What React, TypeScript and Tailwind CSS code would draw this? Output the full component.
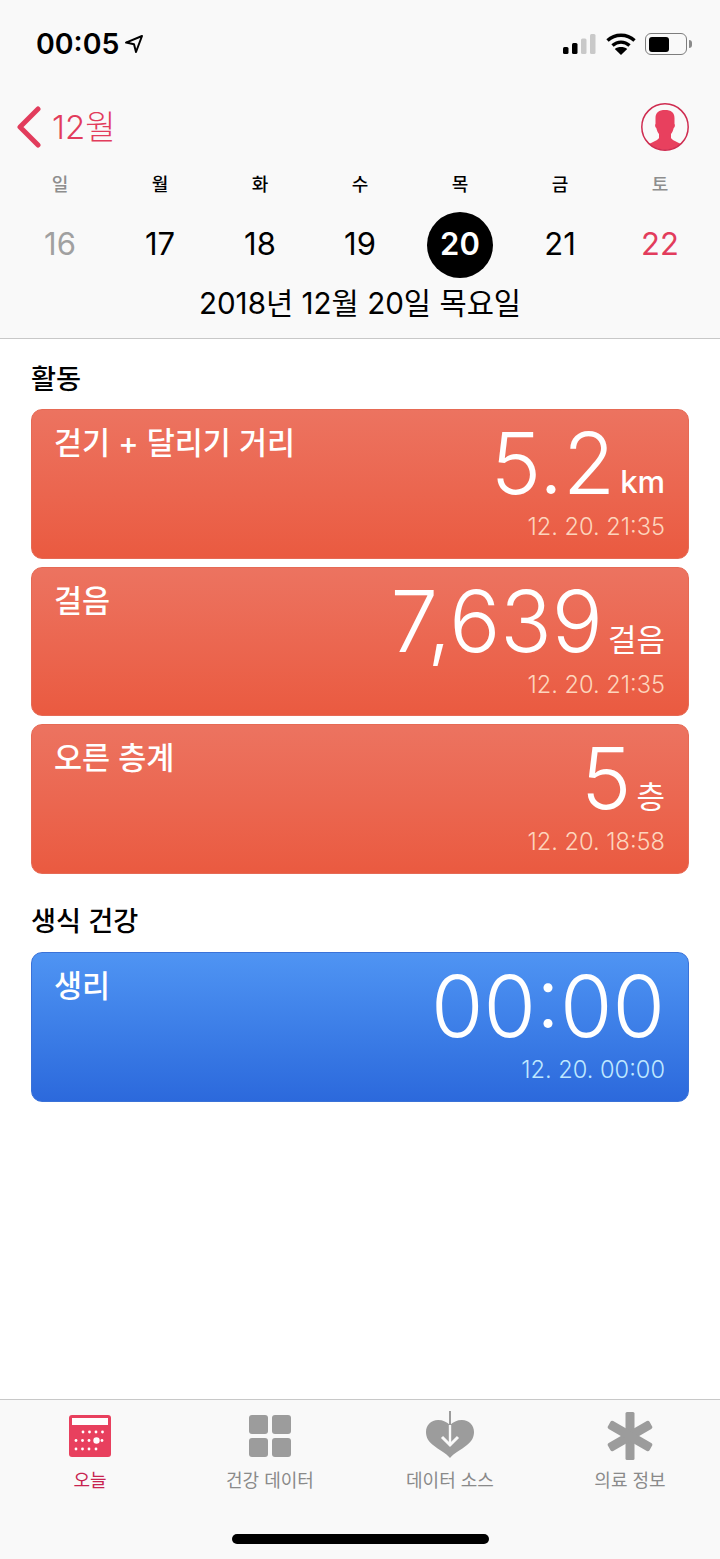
const FONT = "font-['Inter','Noto_Sans_CJK_KR',sans-serif]";

const days = [
  { label: "일", date: "16", tone: "muted" },
  { label: "월", date: "17", tone: "normal" },
  { label: "화", date: "18", tone: "normal" },
  { label: "수", date: "19", tone: "normal" },
  { label: "목", date: "20", tone: "today" },
  { label: "금", date: "21", tone: "normal" },
  { label: "토", date: "22", tone: "weekend" },
];

function LocationArrow() {
  return (
    <svg width="20" height="20" viewBox="0 0 20 20" fill="none" className="mb-[2px] ml-[5px]">
      <path d="M2 8.6 L18 2 L12 18 L10 10.2 Z" stroke="#000" strokeWidth="2" strokeLinejoin="round" />
    </svg>
  );
}

function StatusIcons() {
  return (
    <div className="flex items-center">
      <svg width="33" height="20" viewBox="0 0 33 20">
        <rect x="0" y="13" width="5.5" height="7" rx="1.5" fill="#000" />
        <rect x="9" y="9" width="5.5" height="11" rx="1.5" fill="#000" />
        <rect x="18" y="4.5" width="5.5" height="15.5" rx="1.5" fill="#c9c9c9" />
        <rect x="27" y="0" width="5.5" height="20" rx="1.5" fill="#c9c9c9" />
      </svg>
      <svg width="30" height="22" viewBox="0 0 30 22" className="ml-[10px]">
        <path d="M1.5 7.5 C9 0.5 21 0.5 28.5 7.5" fill="none" stroke="#000" strokeWidth="3.4" />
        <path d="M6.5 12.5 C11.5 8 18.5 8 23.5 12.5" fill="none" stroke="#000" strokeWidth="3.4" />
        <path d="M8.8 16 C12 13.4 18 13.4 21.2 16 L15 22 Z" fill="#000" />
      </svg>
      <div className="ml-[9px] flex items-center">
        <div className="flex h-[22px] w-[42px] items-center rounded-[6px] border border-[#7d7d7d] p-[2.5px]">
          <div className="h-full w-[20px] rounded-[3px] bg-black" />
        </div>
        <div className="ml-[2px] h-[8px] w-[3px] rounded-r-full bg-[#8a8a8a]" />
      </div>
    </div>
  );
}

function ProfileIcon() {
  return (
    <svg width="48" height="48" viewBox="0 0 48 48">
      <defs>
        <clipPath id="profile-clip">
          <circle cx="24" cy="24" r="23" />
        </clipPath>
      </defs>
      <g clipPath="url(#profile-clip)">
        <path
          d="M24 7 C30 7 33.5 9.5 33.5 15 L33.5 21 C34.3 21.5 33.9 24.5 32.7 25 C32 28 31 30 30 31 L30 35 C31 38 42 40 46 46 L46 48 L2 48 L2 46 C6 40 17 38 18 35 L18 31 C17 30 16 28 15.3 25 C14.1 24.5 13.7 21.5 14.5 21 L14.5 15 C14.5 9.5 18 7 24 7 Z"
          fill="#e8405e"
        />
      </g>
      <circle cx="24" cy="24" r="23.2" fill="none" stroke="#cf2c50" strokeWidth="1.5" />
    </svg>
  );
}

function Card({ title, value, unit, unitBold = false, time, blue = false }: { title: string; value: string; unit?: string; unitBold?: boolean; time: string; blue?: boolean }) {
  return (
    <div
      className={`flex h-[149.5px] justify-between rounded-[11px] border pl-[22px] pr-[23px] ${
        blue
          ? "border-[#3a72d8] bg-gradient-to-b from-[#4f94f3] to-[#2c69dc]"
          : "border-[#e66a55] bg-gradient-to-b from-[#ec7360] to-[#ea5a40]"
      }`}
    >
      <div className="pt-[12px] text-[30.5px] font-medium leading-[42px] text-white">{title}</div>
      <div className="flex flex-col items-end">
        <div className="flex h-[102px] items-end pb-[6px]">
          <span className="font-['Inter'] text-[85px] font-light leading-[85px] text-white">{value}</span>
          {unit && <span className={`mb-[4px] ml-[5px] text-[31px] leading-[40px] text-white ${unitBold ? "font-medium" : "font-normal"}`}>{unit}</span>}
        </div>
        <div className={`text-[23.6px] font-light leading-[30px] ${blue ? "text-[#bfe8ff]" : "text-[#fdd5bd]"}`}>{time}</div>
      </div>
    </div>
  );
}

function Tab({ label, active = false, children }: { label: string; active?: boolean; children: React.ReactNode }) {
  return (
    <div className="flex w-[180px] flex-col items-center">
      <div className="flex h-[50px] items-center justify-center">{children}</div>
      <div className={`mt-[7px] text-[18px] leading-[26px] ${active ? "text-[#c8234f]" : "text-[#8a8a8a]"}`}>{label}</div>
    </div>
  );
}

export default function App() {
  return (
    <div className={`flex h-[1559px] w-[720px] flex-col overflow-hidden bg-white ${FONT}`}>
      {/* Header */}
      <div className="h-[339px] border-b border-[#c8c8c8] bg-[#f9f9f9]">
        <div className="flex h-[88px] items-center justify-between pl-[36px] pr-[28px]">
          <div className="flex items-center pt-[1px] text-[28.5px] font-semibold leading-none text-black">
            00:05
            <LocationArrow />
          </div>
          <StatusIcons />
        </div>
        <div className="flex h-[78px] items-center justify-between pl-[17px] pr-[31px]">
          <div className="flex items-center">
            <svg width="24" height="42" viewBox="0 0 24 42" fill="none">
              <path d="M21 3 L3 21 L21 39" stroke="#e23c5c" strokeWidth="5" strokeLinecap="round" strokeLinejoin="round" />
            </svg>
            <span className="ml-[11px] text-[33px] font-light leading-none text-[#e23c5c]">12월</span>
          </div>
          <ProfileIcon />
        </div>
        <div className="mt-[7px] grid grid-cols-7 px-[10px]">
          {days.map((d) => (
            <div key={d.date} className="flex flex-col items-center">
              <div className={`text-[18px] font-medium leading-[24px] ${d.tone === "muted" || d.tone === "weekend" ? "text-[#8e8e8e]" : "text-black"}`}>{d.label}</div>
              <div
                className={`mt-[15px] flex h-[66px] w-[66px] items-center justify-center rounded-full pb-[3px] text-[31px] leading-none ${
                  d.tone === "today"
                    ? "bg-black font-semibold text-white"
                    : d.tone === "muted"
                      ? "text-[#a0a0a0]"
                      : d.tone === "weekend"
                        ? "text-[#e23c5c]"
                        : "text-black"
                }`}
              >
                {d.date}
              </div>
            </div>
          ))}
        </div>
        <div className="mt-[5px] text-center text-[29.6px] leading-[40px] text-black">2018년 12월 20일 목요일</div>
      </div>

      {/* Content */}
      <div className="flex-1 px-[31px]">
        <div className="pb-[9px] pt-[21px] text-[27.2px] font-medium leading-[40px] text-black">활동</div>
        <div className="flex flex-col gap-[8px]">
          <Card title="걷기 + 달리기 거리" value="5.2" unit="km" unitBold time="12. 20. 21:35" />
          <Card title="걸음" value="7,639" unit="걸음" time="12. 20. 21:35" />
          <Card title="오른 층계" value="5" unit="층" time="12. 20. 18:58" />
        </div>
        <div className="pb-[10px] pt-[28.5px] text-[27.2px] font-medium leading-[40px] text-black">생식 건강</div>
        <Card title="생리" value="00:00" time="12. 20. 00:00" blue />
      </div>

      {/* Tab bar */}
      <div className="relative h-[160px] border-t border-[#c8c8c8] bg-[#f9f9f9]">
        <div className="flex pt-[11px]">
          <Tab label="오늘" active>
            <svg width="42" height="42" viewBox="0 0 42 42">
              <rect width="42" height="42" rx="3" fill="#e8405e" />
              <rect x="3" y="3" width="36" height="7" fill="#fff" />
              {[12, 18.5, 25, 31.5].map((x) => <circle key={x} cx={x + 2} cy="17" r="1.4" fill="#fff" />)}
              {[7, 13.5, 20, 33].map((x) => <circle key={x} cx={x} cy="25.5" r="1.4" fill="#fff" />)}
              <circle cx="27.5" cy="25.5" r="3.2" fill="#fff" />
              {[7, 13.5, 20, 27].map((x) => <circle key={x} cx={x} cy="34" r="1.4" fill="#fff" />)}
            </svg>
          </Tab>
          <Tab label="건강 데이터">
            <div className="grid grid-cols-2 gap-[4px]">
              <div className="h-[19px] w-[19px] rounded-[3px] bg-[#9c9c9c]" />
              <div className="h-[19px] w-[19px] rounded-[3px] bg-[#9c9c9c]" />
              <div className="h-[19px] w-[19px] rounded-[3px] bg-[#9c9c9c]" />
              <div className="h-[19px] w-[19px] rounded-[3px] bg-[#9c9c9c]" />
            </div>
          </Tab>
          <Tab label="데이터 소스">
            <svg width="50" height="50" viewBox="0 0 50 50">
              <path d="M25 47 C21 42 14 39 8 34 C3 30 1 26 1 21 C1 14 6 9 13 9 C18 9 22 11 25 14 C28 11 32 9 37 9 C44 9 49 14 49 21 C49 26 47 30 42 34 C36 39 29 42 25 47 Z" fill="#9c9c9c" />
              <path d="M25 0 L25 14" stroke="#9c9c9c" strokeWidth="2" />
              <path d="M25 14 L25 33" stroke="#f9f9f9" strokeWidth="2.4" />
              <path d="M17 26 L25 34 L33 26" fill="none" stroke="#f9f9f9" strokeWidth="3" />
            </svg>
          </Tab>
          <Tab label="의료 정보">
            <svg width="46" height="48" viewBox="0 0 46 48">
              <g fill="#9c9c9c">
                <rect x="18.5" y="0" width="9" height="48" rx="1.5" />
                <rect x="18.5" y="0" width="9" height="48" rx="2" transform="rotate(60 23 24)" />
                <rect x="18.5" y="0" width="9" height="48" rx="2" transform="rotate(-60 23 24)" />
              </g>
            </svg>
          </Tab>
        </div>
        <div className="absolute bottom-[15px] left-[232px] h-[10px] w-[257px] rounded-full bg-black" />
      </div>
    </div>
  );
}
